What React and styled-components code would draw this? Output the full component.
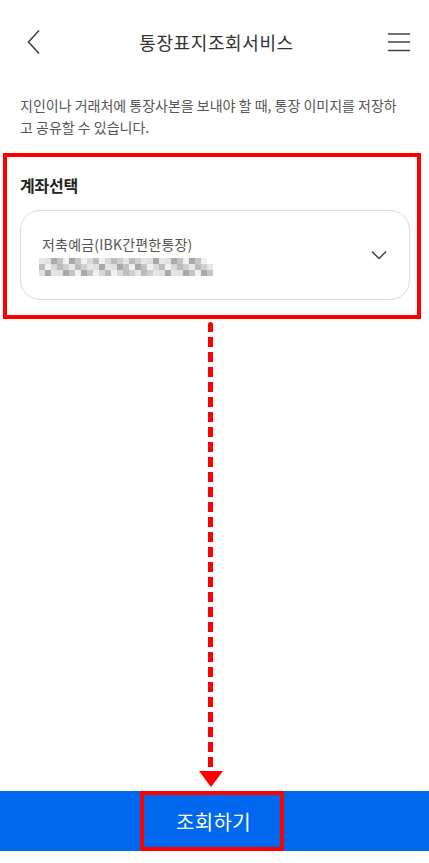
import React from 'react';
import styled, {createGlobalStyle} from 'styled-components';

const GlobalStyle = createGlobalStyle`
    html, body {
        margin: 0;
        padding: 0;
        background: #fff;
    }
    * {
        box-sizing: border-box;
    }
`;

const Page = styled.div`
    width: 429px;
    height: 863px;
    display: flex;
    flex-direction: column;
    font-family: 'Noto Sans CJK KR', 'Noto Sans', sans-serif;
    background: #fff;
    overflow: hidden;
`;

const Header = styled.div`
    height: 84px;
    display: flex;
    align-items: center;
    justify-content: space-between;
    padding: 0 16px 0 20px;
`;

const IconBtn = styled.div`
    width: 28px;
    height: 28px;
    display: flex;
    align-items: center;
    justify-content: center;
`;

const Title = styled.h1`
    margin: 0;
    font-size: 18px;
    font-weight: 400;
    color: #333;
    letter-spacing: 0.6px;
`;

const Desc = styled.p`
    margin: 10px 24px 0 20px;
    font-size: 14px;
    line-height: 22px;
    color: #555;
    letter-spacing: 0;
    word-break: break-all;
`;

const Highlight = styled.section`
    margin: 15px 8px 0 3px;
    border: 4px solid #ff0000;
    padding: 16px 7px 15px 13px;
`;

const Label = styled.h2`
    margin: 0 0 13px;
    font-size: 16px;
    font-weight: 700;
    color: #222;
    letter-spacing: -0.2px;
`;

const SelectBox = styled.div`
    height: 90px;
    border: 1px solid #dcdcdc;
    border-radius: 20px;
    display: flex;
    align-items: center;
    justify-content: space-between;
    padding: 0 22px 0 21px;
`;

const AccountInfo = styled.div`
    display: flex;
    flex-direction: column;
    gap: 4px;
`;

const AccountName = styled.div`
    font-size: 14px;
    color: #555;
    letter-spacing: 0.2px;
    line-height: 20px;
`;

const Mosaic = styled.div`
    display: grid;
    grid-template-columns: repeat(29, 6px);
    grid-auto-rows: 6px;
    margin-left: -3px;
`;

const Cell = styled.div`
    background: ${p => p.$shade};
`;

const ArrowArea = styled.div`
    flex: 1;
    display: flex;
    flex-direction: column;
    align-items: center;
    padding-right: 8px;
`;

const Dashes = styled.div`
    flex: 1;
    width: 5px;
    margin-top: 3px;
    background: repeating-linear-gradient(
        to bottom,
        #ff0000 0,
        #ff0000 10px,
        transparent 10px,
        transparent 15px
    );
    border-radius: 3px;
`;

const ArrowHead = styled.div`
    width: 0;
    height: 0;
    border-left: 12px solid transparent;
    border-right: 12px solid transparent;
    border-top: 16px solid #ff0000;
    margin-bottom: 4px;
`;

const BottomBar = styled.div`
    height: 60px;
    background: #0068ee;
    display: flex;
    justify-content: center;
    padding-right: 6px;
`;

const BottomBtn = styled.button`
    width: 144px;
    height: 60px;
    border: 4px solid #ff0000;
    background: transparent;
    color: #fff;
    font-family: inherit;
    font-size: 20px;
    font-weight: 400;
    letter-spacing: 0.4px;
    padding: 0 0 0 4px;
`;

const Footer = styled.div`
    height: 12px;
    background: #fff;
`;

const shades = ['#e6e6e6', '#cfcfcf', '#bcbcbc', '#d9d9d9', '#f0f0f0', '#c4c4c4', '#a9a9a9', '#e0e0e0'];
const mosaic = Array.from({length: 29 * 3}, (_, i) => {
    const col = i % 29;
    if (col === 28 && i < 29) return '#fff';
    return shades[(i * 7 + Math.floor(i / 5) * 3) % shades.length];
});

const App = () => {
    return (
        <Page>
            <GlobalStyle/>
            <Header>
                <IconBtn>
                    <svg width="16" height="26" viewBox="0 0 16 26">
                        <path d="M13 1.5 L2.5 13 L13 24.5" fill="none" stroke="#444" strokeWidth="1.6"/>
                    </svg>
                </IconBtn>
                <Title>통장표지조회서비스</Title>
                <IconBtn>
                    <svg width="24" height="20" viewBox="0 0 24 20">
                        <path d="M1 2 H23 M1 10 H23 M1 18.5 H23" stroke="#444" strokeWidth="1.6"/>
                    </svg>
                </IconBtn>
            </Header>
            <Desc>지인이나 거래처에 통장사본을 보내야 할 때, 통장 이미지를 저장하고 공유할 수 있습니다.</Desc>
            <Highlight>
                <Label>계좌선택</Label>
                <SelectBox>
                    <AccountInfo>
                        <AccountName>저축예금(IBK간편한통장)</AccountName>
                        <Mosaic>
                            {mosaic.map((s, i) => <Cell key={i} $shade={s}/>)}
                        </Mosaic>
                    </AccountInfo>
                    <svg width="16" height="10" viewBox="0 0 16 10">
                        <path d="M1 1.5 L8 8.5 L15 1.5" fill="none" stroke="#444" strokeWidth="1.5"/>
                    </svg>
                </SelectBox>
            </Highlight>
            <ArrowArea>
                <Dashes/>
                <ArrowHead/>
            </ArrowArea>
            <BottomBar>
                <BottomBtn>조회하기</BottomBtn>
            </BottomBar>
            <Footer/>
        </Page>
    );
};

export default App;
